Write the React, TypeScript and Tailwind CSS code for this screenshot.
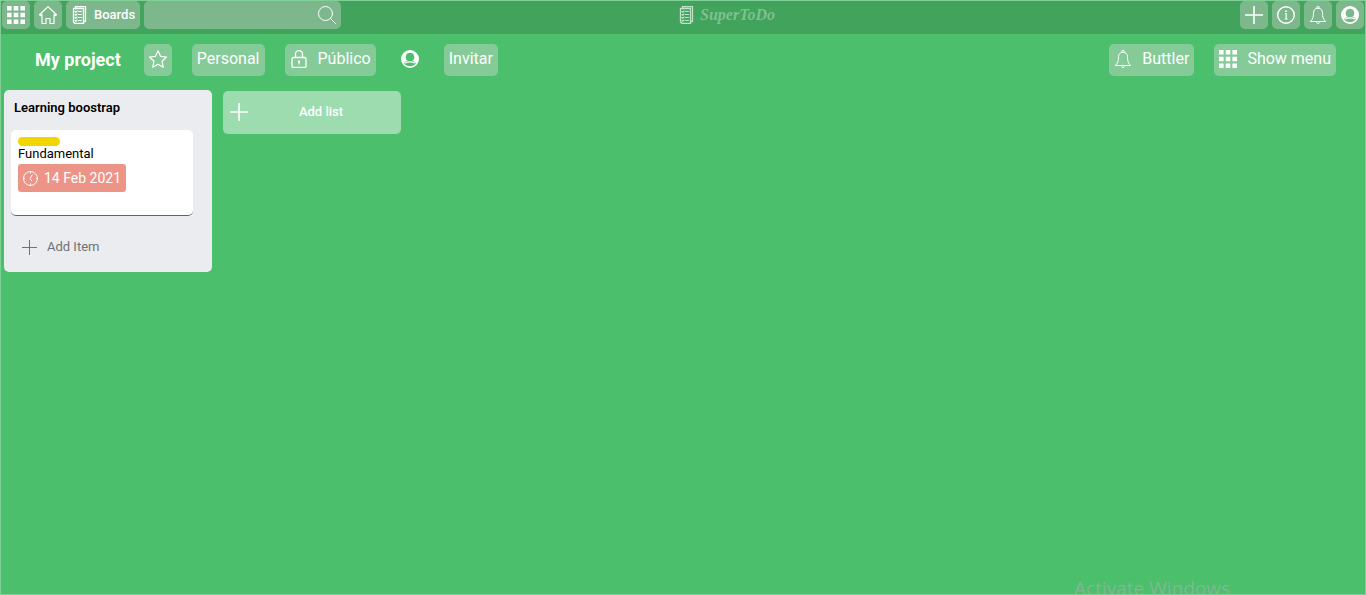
import type { ReactNode } from "react";

function Icon({ children, className = "size-[18px]" }: { children: ReactNode; className?: string }) {
  return (
    <svg
      viewBox="0 0 18 18"
      fill="none"
      stroke="currentColor"
      strokeWidth="1"
      strokeLinecap="round"
      strokeLinejoin="round"
      aria-hidden="true"
      className={`${className} shrink-0`}
    >
      {children}
    </svg>
  );
}

function GridIcon() {
  return (
    <Icon>
      <path
        fill="currentColor"
        stroke="none"
        d="M0 0h4.600v4.600H0zM6.700 0h4.600v4.600H6.700zM13.400 0H18v4.600h-4.600zM0 6.700h4.600v4.600H0zM6.700 6.700h4.600v4.600H6.700zM13.400 6.700H18v4.600h-4.600zM0 13.400h4.600V18H0zM6.700 13.400h4.600V18H6.700zM13.400 13.400H18V18h-4.600z"
      />
    </Icon>
  );
}

function HomeIcon() {
  return (
    <Icon>
      <path d="M9 .6.5 8.700l.9 1L3 8.500v9h4v-5h4v5h4v-9l1.600 1.200.9-1z" strokeWidth="1.200" />
    </Icon>
  );
}

function BoardsIcon() {
  return (
    <Icon>
      <path d="M4.500 2.500V.5h10v15h-2M2.500 2.500h10v15H4l-1.500-1.500z" strokeWidth="1.300" />
      <path
        d="m4 5.500.8.8 1.400-1.500M4 8.500l.8.800 1.400-1.500M4 11.500l.8.800 1.400-1.500M4 14.500l.8.800 1.400-1.500M7.500 5.500h3M7.500 8.500h3M7.500 11.500h3M7.500 14.500h3"
        strokeWidth="1.100"
      />
    </Icon>
  );
}

function SearchIcon() {
  return (
    <Icon>
      <circle cx="7.500" cy="7.500" r="7" />
      <path d="m12.500 12.500 5 5" />
    </Icon>
  );
}

function PlusIcon({ thin = false }: { thin?: boolean }) {
  return thin ? (
    <Icon className="size-[15px]">
      <path d="M9 0v18M0 9h18" strokeWidth="1.200" />
    </Icon>
  ) : (
    <Icon>
      <path d="M9 0v18M0 9h18" strokeWidth="1.600" strokeLinecap="butt" />
    </Icon>
  );
}

function InfoIcon() {
  return (
    <Icon>
      <circle cx="9" cy="9" r="8.300" strokeWidth="1.400" />
      <path d="M8 7.500h1.200v5.500M7.800 13h2.800" strokeWidth="1.200" strokeLinecap="butt" />
      <circle cx="9" cy="5.200" r=".9" fill="currentColor" stroke="none" />
    </Icon>
  );
}

function BellIcon() {
  return (
    <Icon>
      <path d="M7.800 2.200V1.200a1.200 1.200 0 0 1 2.400 0v1M9 2.200c-3 0-4.500 2-4.500 4.500 0 4.300-.5 6.300-3.200 8.800h15.400c-2.700-2.500-3.200-4.500-3.200-8.800 0-2.500-1.500-4.500-4.500-4.500zM7.200 15.700c0 2.400 3.600 2.400 3.600 0" />
    </Icon>
  );
}

function UserIcon() {
  return (
    <Icon>
      <path
        fill="currentColor"
        stroke="none"
        fillRule="evenodd"
        d="M9 0a9 9 0 1 1 0 18A9 9 0 0 1 9 0zM9 2.700a4.300 4.500 0 0 0-2.300 8.300C5 11.300 3.400 12 2.900 13.200a7.500 7.500 0 0 0 12.200 0C14.600 12 13 11.300 11.300 11A4.300 4.500 0 0 0 9 2.700z"
      />
      <path d="M4 13c2-.9 3.500-1.200 5-1.200s3 .3 5 1.200" strokeWidth="1.200" />
    </Icon>
  );
}

function StarIcon() {
  return (
    <Icon>
      <path d="m9 .7 2.500 5.600 6 .7-4.500 4.200 1.300 6.100L9 14.300l-5.300 3L5 11.200.5 7l6-.7z" strokeWidth="1.200" />
    </Icon>
  );
}

function LockIcon() {
  return (
    <Icon>
      <rect x="2" y="7.500" width="14" height="10" rx="1.500" strokeWidth="1.300" />
      <path d="M5.500 7.500V4a3.500 3.500 0 0 1 7 0v3.500" strokeWidth="1.300" />
      <circle cx="9" cy="11.500" r="1.200" fill="currentColor" stroke="none" />
      <path d="M9 11.500v2.500" strokeWidth="1.200" />
    </Icon>
  );
}

function ClockIcon() {
  return (
    <Icon className="size-[15px]">
      <circle cx="9" cy="9" r="8.400" strokeWidth="1.200" />
      <path d="M9 .6V2.500M9 15.500v1.900M.6 9h1.200M16.200 9h1.200M11 4.500 8.500 9.200l2 2.500" strokeWidth="1.200" />
    </Icon>
  );
}

function TopButton({ label, children }: { label: string; children: ReactNode }) {
  return (
    <button type="button" aria-label={label} className="flex size-7 items-center justify-center rounded-[5px] bg-[#7db88c]">
      {children}
    </button>
  );
}

function BarButton({ label, children }: { label?: string; children: ReactNode }) {
  return (
    <button
      type="button"
      aria-label={label}
      className="flex h-8 items-center gap-2.5 rounded-[5px] bg-[#84cb98] px-[5px] pb-[3px] text-base whitespace-nowrap"
    >
      {children}
    </button>
  );
}

function TopBar() {
  return (
    <header className="grid h-[33px] grid-cols-[1fr_auto_1fr] items-start bg-[#41a35c] px-px">
      <nav className="flex gap-1">
        <TopButton label="Apps">
          <GridIcon />
        </TopButton>
        <TopButton label="Home">
          <HomeIcon />
        </TopButton>
        <button type="button" className="flex h-7 items-center gap-[5px] rounded-[5px] bg-[#7db88c] px-[5px] text-[13px] font-medium">
          <BoardsIcon />
          Boards
        </button>
        <label className="flex h-7 w-[197px] items-center rounded-[5px] bg-[#7db88c] px-[5px]">
          <input type="search" aria-label="Search" className="min-w-0 flex-1 bg-transparent text-[13px] outline-none" />
          <SearchIcon />
        </label>
      </nav>
      <a href="#" className="ml-[87px] flex h-7 items-center gap-1 text-[#7dc18f]">
        <span className="text-[#bfe3c9]">
          <BoardsIcon />
        </span>
        <span className="font-['Liberation_Serif',serif] text-base font-bold italic">SuperToDo</span>
      </a>
      <nav className="flex justify-end gap-1">
        <TopButton label="Create">
          <PlusIcon />
        </TopButton>
        <TopButton label="Information">
          <InfoIcon />
        </TopButton>
        <TopButton label="Notifications">
          <BellIcon />
        </TopButton>
        <TopButton label="Account">
          <UserIcon />
        </TopButton>
      </nav>
    </header>
  );
}

function BoardBar() {
  return (
    <div className="flex items-center justify-between px-[29px] pt-2.5">
      <div className="flex items-center gap-5">
        <h1 className="pr-[3px] pl-[5px] text-lg font-bold">My project</h1>
        <BarButton label="Favourite">
          <StarIcon />
        </BarButton>
        <BarButton>Personal</BarButton>
        <BarButton>
          <LockIcon />
          Público
        </BarButton>
        <button type="button" aria-label="Member" className="flex h-8 items-center px-[5px] pb-[3px]">
          <UserIcon />
        </button>
        <BarButton>Invitar</BarButton>
      </div>
      <div className="flex items-center gap-5">
        <BarButton>
          <BellIcon />
          Buttler
        </BarButton>
        <BarButton>
          <GridIcon />
          Show menu
        </BarButton>
      </div>
    </div>
  );
}

function List() {
  return (
    <section className="h-[182px] w-52 rounded-[5px] bg-[#ebecf0] px-[7px] pt-2 text-black">
      <h2 className="px-[3px] text-[13px] leading-5 font-semibold">Learning boostrap</h2>
      <article className="mt-3 h-[86px] w-[182px] rounded-[5px] border-b border-[#5f6368] bg-white px-[7px] pt-[7px]">
        <div className="h-[9px] w-[42px] rounded-full bg-[#f2d600]" />
        <h3 className="text-[13px] leading-4">Fundamental</h3>
        <time
          dateTime="2021-02-14"
          className="mt-0.5 flex h-7 w-fit items-center gap-1.5 rounded-[3px] bg-[#ec9488] px-[5px] text-sm text-white"
        >
          <ClockIcon />
          14 Feb 2021
        </time>
      </article>
      <button type="button" className="mt-5 ml-[11px] flex h-[22px] items-center gap-2.5 text-[13px] text-[#6f7277]">
        <PlusIcon thin />
        Add Item
      </button>
    </section>
  );
}

export default function App() {
  return (
    <div className="relative flex min-h-screen flex-col overflow-hidden border border-[#7fd096] bg-[#4bbf6b] font-[Roboto,sans-serif] text-white">
      <TopBar />
      <BoardBar />
      <main className="flex items-start gap-[11px] px-[3px] pt-3.5">
        <List />
        <button
          type="button"
          className="mt-px grid h-[43px] w-[178px] grid-cols-[18px_1fr] items-center rounded-[5px] bg-[#9ddcaf] px-[7px] pb-px text-[13px] font-medium"
        >
          <PlusIcon />
          <span>Add list</span>
        </button>
      </main>
      <p className="absolute right-[135px] -bottom-2 font-['Open_Sans',sans-serif] text-[19px] leading-7 text-[#7fb891]">
        Activate Windows
      </p>
    </div>
  );
}
